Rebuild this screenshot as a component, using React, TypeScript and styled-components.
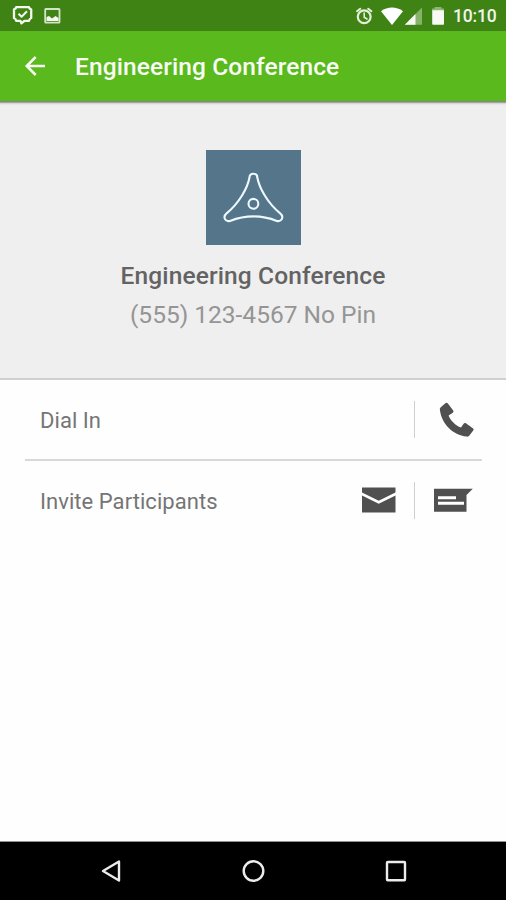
import React from "react";
import styled, { createGlobalStyle } from "styled-components";

const GlobalStyle = createGlobalStyle`
  *, *::before, *::after { box-sizing: border-box; }
  body { margin: 0; background: #fff; font-family: Roboto, "Liberation Sans", sans-serif; }
  svg { display: block; flex: none; }
`;

const Screen = styled.div`
  width: 506px;
  height: 900px;
  display: flex;
  flex-direction: column;
  overflow: hidden;
  background: #fefefe;
`;

const StatusBar = styled.header`
  height: 31px;
  flex: none;
  display: flex;
  justify-content: space-between;
  background: #3f8315;
`;

const StatusGroup = styled.div`
  display: flex;
  align-items: flex-start;
`;

const Clock = styled.span`
  width: 53px;
  padding-top: 1px;
  font-size: 17.5px;
  line-height: 31px;
  font-weight: 500;
  letter-spacing: -0.2px;
  color: #f1f6ec;
`;

const Toolbar = styled.div`
  height: 71px;
  flex: none;
  display: flex;
  align-items: center;
  background: #5ab91c;
  border-bottom: 1px solid #7d8a76;
  box-shadow: 0 1px 1px #a5a5a5, 0 2px 2px rgba(0, 0, 0, 0.1);
  z-index: 1;
`;

const Title = styled.h1`
  margin: 2px 0 0;
  font-size: 24.5px;
  line-height: 30px;
  font-weight: 500;
  letter-spacing: 0.1px;
  color: #f8fcf4;
  white-space: nowrap;
`;

const Summary = styled.section`
  height: 278px;
  flex: none;
  display: flex;
  flex-direction: column;
  align-items: center;
  padding-top: 48px;
  background: #efefef;
  border-bottom: 2px solid #d0d0d0;
`;

const Avatar = styled.div`
  width: 95px;
  height: 95px;
  background: #54758a;
`;

const Name = styled.h2`
  margin: 16px 0 0;
  font-size: 24.5px;
  line-height: 30px;
  font-weight: 500;
  letter-spacing: 0.12px;
  color: #636363;
  white-space: nowrap;
`;

const Phone = styled.p`
  margin: 9px 0 0;
  font-size: 24.5px;
  line-height: 30px;
  color: #959595;
  white-space: nowrap;
`;

const Actions = styled.main`
  flex: 1;
  padding: 0 24px 0 25px;
`;

const Row = styled.div<{ $divided?: boolean }>`
  height: ${(p) => (p.$divided ? "81px" : "79px")};
  display: flex;
  align-items: center;
  padding-left: 15px;
  border-bottom: ${(p) => (p.$divided ? "2px solid #d8d8d8" : "0")};
`;

const Label = styled.span`
  flex: 1;
  padding-top: 2px;
  font-size: 22px;
  line-height: 28px;
  letter-spacing: 0.05px;
  color: #757575;
  white-space: nowrap;
`;

const Separator = styled.span`
  width: 1px;
  height: 37px;
  margin-right: 15px;
  background: #cfcfcf;
`;

const NavBar = styled.nav`
  height: 59px;
  flex: none;
  display: flex;
  align-items: center;
  justify-content: center;
  gap: 112px;
  background: #000;
  border-top: 1px solid #929292;
`;

const ChatCheckIcon = () => (
  <svg width="44" height="31" viewBox="0 0 44 31" fill="none" stroke="#f4f8ef" strokeLinejoin="round">
    <path strokeWidth="2.3" d="M16.2 7.2H29Q29.3 8.8 31.2 9.4V18Q29.3 18.8 29 20.8H24.4L21.4 23.4L20.4 20.8H16.2Q15.9 18.8 14 18V9.4Q15.9 8.8 16.2 7.2Z" />
    <path strokeWidth="2" d="M18.5 13.8L21.6 16.8L27 11.2" />
  </svg>
);

const PictureIcon = () => (
  <svg width="20" height="31" viewBox="44 0 20 31">
    <rect x="45.2" y="9" width="14.3" height="13.6" rx="0.6" fill="none" stroke="#d5e4c9" strokeWidth="1.8" />
    <path fill="#f4f8ef" d="M46.5 17L49 16L52 18.5L55.5 16L58.5 18V21H46.5Z" />
  </svg>
);

const SystemIcons = () => (
  <svg width="98" height="31" viewBox="355 0 98 31">
    <g fill="none" stroke="#e4eedb" strokeLinecap="round">
      <circle cx="364.2" cy="16.8" r="6.4" strokeWidth="2.2" />
      <path strokeWidth="1.6" d="M364.2 13V17.3L367 19" />
      <path strokeWidth="2" d="M357 11.2L360.2 8.7M371.4 11.2L368.2 8.7" />
    </g>
    <path fill="#fff" d="M381 11.3C387.5 6.3 396.5 6.3 403 11.3L392 25Z" />
    <path fill="#86b369" d="M422 7.5V24.7H404.8Z" />
    <path fill="#f5f9f1" d="M415.5 14V24.7H404.8Z" />
    <path fill="#8cb770" d="M434.5 8.5V7H441.5V8.5H444V11H432V8.5Z" />
    <rect x="432.2" y="10.3" width="11.8" height="14.5" rx="0.8" fill="#f8fbf5" />
  </svg>
);

const BackArrow = () => (
  <svg width="75" height="70" viewBox="0 31 75 70" fill="none" stroke="#f8fcf4" strokeWidth="2.5">
    <path d="M45 66H27M35.7 57L26.7 66L35.7 75" />
  </svg>
);

const ConferenceLogo = () => (
  <svg width="95" height="95" viewBox="206 150 95 95" fill="none" stroke="#edf8ff" strokeWidth="2.1" strokeLinejoin="round">
    <path d="M249.5 177.5C249.5 172.5 257.3 172.5 257.3 177.5C259.3 188 267.6 203.2 280.2 213.4C284.3 216.8 281.8 222.2 276.8 220.9C261 214.8 246 214.8 230 220.9C225 222.2 222.5 216.8 226.6 213.4C239.2 203.2 247.5 188 249.5 177.5Z" />
    <circle cx="253.4" cy="203.8" r="4.9" />
  </svg>
);

const HandsetIcon = () => (
  <svg width="52" height="38" viewBox="430 401 52 38">
    <path
      fill="#505050"
      d="M440 410.5C439.6 408.8 440 407.8 441 407L445.4 403.3C446.4 402.5 447.2 402.7 447.9 403.6L453 410.3C453.7 411.3 453.6 412 452.8 412.8L448.6 415.4C450.5 420.5 455.3 425.2 461 427.6L463.6 423.8C464.3 422.9 465 422.8 465.9 423.3L472.8 428.2C473.7 428.9 473.9 429.6 473.2 430.6L469.6 435.3C468.8 436.4 468 436.8 466.6 436.6C452.8 434.8 441.8 424.2 440 410.5Z"
    />
  </svg>
);

const MailIcon = () => (
  <svg width="52" height="38" viewBox="362 482 52 38">
    <path fill="#505050" d="M362 487.5H395.5V512.5H362Z" />
    <path fill="none" stroke="#fff" strokeWidth="2.6" d="M361 493.5L378.7 502.2L396.5 493.5" />
  </svg>
);

const MessageIcon = () => (
  <svg width="52" height="38" viewBox="430 482 52 38">
    <path fill="#505050" d="M434 488.8H472.8L466.5 495V511.8H434Z" />
    <path fill="#fff" d="M438 496.3H456V499.3H438ZM438 501.8H464V504.8H438Z" />
  </svg>
);

const NavIcon = ({ children }: { children: React.ReactNode }) => (
  <svg width="30" height="30" viewBox="0 0 30 30" fill="none" stroke="#ececec" strokeWidth="2.4" strokeLinejoin="round">
    {children}
  </svg>
);

export default function App() {
  return (
    <>
      <GlobalStyle />
      <Screen>
        <StatusBar>
          <StatusGroup>
            <ChatCheckIcon />
            <PictureIcon />
          </StatusGroup>
          <StatusGroup>
            <SystemIcons />
            <Clock>10:10</Clock>
          </StatusGroup>
        </StatusBar>
        <Toolbar>
          <BackArrow />
          <Title>Engineering Conference</Title>
        </Toolbar>
        <Summary>
          <Avatar>
            <ConferenceLogo />
          </Avatar>
          <Name>Engineering Conference</Name>
          <Phone>(555) 123-4567 No Pin</Phone>
        </Summary>
        <Actions>
          <Row $divided>
            <Label>Dial In</Label>
            <Separator />
            <HandsetIcon />
          </Row>
          <Row>
            <Label>Invite Participants</Label>
            <MailIcon />
            <Separator />
            <MessageIcon />
          </Row>
        </Actions>
        <NavBar>
          <NavIcon>
            <path d="M7 15L23 5.5V24.5Z" />
          </NavIcon>
          <NavIcon>
            <circle cx="15.5" cy="15" r="9.8" />
          </NavIcon>
          <NavIcon>
            <rect x="7" y="6" width="18" height="18.2" rx="0.8" />
          </NavIcon>
        </NavBar>
      </Screen>
    </>
  );
}
